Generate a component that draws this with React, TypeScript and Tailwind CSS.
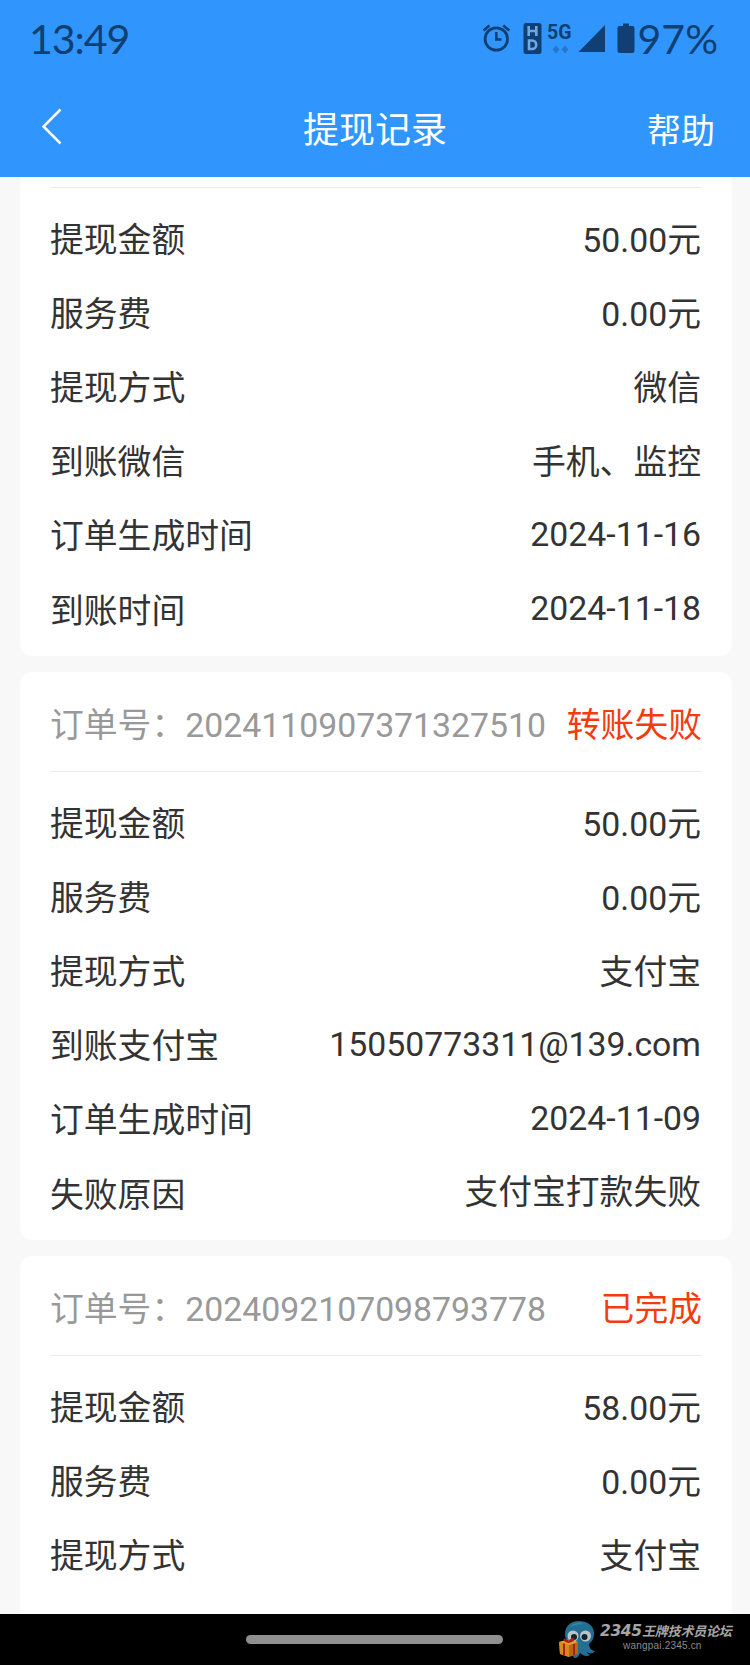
import clsx from 'clsx';

interface Field {
  label: string;
  value: string;
  raised?: boolean;
}

interface WithdrawRecord {
  orderNo: string;
  status: string;
  fields: Field[];
}

const records: WithdrawRecord[] = [
  {
    orderNo: '',
    status: '',
    fields: [
      { label: '提现金额', value: '50.00元' },
      { label: '服务费', value: '0.00元' },
      { label: '提现方式', value: '微信' },
      { label: '到账微信', value: '手机、监控' },
      { label: '订单生成时间', value: '2024-11-16', raised: true },
      { label: '到账时间', value: '2024-11-18', raised: true },
    ],
  },
  {
    orderNo: '2024110907371327510',
    status: '转账失败',
    fields: [
      { label: '提现金额', value: '50.00元' },
      { label: '服务费', value: '0.00元' },
      { label: '提现方式', value: '支付宝' },
      { label: '到账支付宝', value: '15050773311@139.com', raised: true },
      { label: '订单生成时间', value: '2024-11-09', raised: true },
      { label: '失败原因', value: '支付宝打款失败', raised: true },
    ],
  },
  {
    orderNo: '2024092107098793778',
    status: '已完成',
    fields: [
      { label: '提现金额', value: '58.00元' },
      { label: '服务费', value: '0.00元' },
      { label: '提现方式', value: '支付宝' },
    ],
  },
];

const StatusBar = () => (
  <div className="flex h-[78px] items-center justify-between pb-[2px] pl-[29px] pr-[32px] text-[#0f3f73]">
    <span className="font-['Lato',sans-serif] text-[41px] leading-none tracking-[-1px]">13:49</span>
    <div className="flex items-center">
      <svg width="156" height="38" viewBox="0 1 156 38" fill="none">
        {/* alarm clock */}
        <circle cx="14.3" cy="21" r="11.2" stroke="currentColor" strokeWidth="2.8" />
        <path d="M14.3 14v7.5h5.2M1.5 12.5l6-5M21.3 7.500l6 5" stroke="currentColor" strokeWidth="2.6" />
        {/* HD badge */}
        <rect x="41.500" y="5" width="18" height="31" rx="2.5" fill="currentColor" />
        <path
          d="M46.700 8v10M54.300 8v10M46.500 13h8M47 22.500h3a4 4 0 0 1 0 8.500h-3z"
          stroke="#6ea9e6"
          strokeWidth="2.600"
        />
        <text x="65" y="21" fill="currentColor" className="font-['Roboto',sans-serif] text-[19.5px] font-bold">
          5G
        </text>
        <path d="M74 27.500l3.500 4-3.500 4-3.500-4zM83 27.500l3.500 4-3.500 4-3.500-4z" fill="#2577cc" />
        {/* signal and battery */}
        <path d="M123 7v27H96.500z" fill="currentColor" />
        <path
          d="M141 5.500h6v2.500h3.500a2 2 0 0 1 2 2v23a2 2 0 0 1-2 2h-13a2 2 0 0 1-2-2V10a2 2 0 0 1 2-2h3.500z"
          fill="currentColor"
        />
      </svg>
      <span className="font-['Lato',sans-serif] text-[41px] leading-none">97%</span>
    </div>
  </div>
);

const NavBar = () => (
  <div className="grid h-[99px] grid-cols-[200px_1fr_200px] items-center pb-px text-white">
    <svg className="ml-[40px]" width="24" height="40" viewBox="0 0 24 40" fill="none">
      <path d="M20.500 2.500L3.500 19.500l17 17" stroke="currentColor" strokeWidth="2.500" />
    </svg>
    <h1 className="pt-[7px] text-center text-[36px]">提现记录</h1>
    <span className="pt-[7px] pr-[35px] text-right text-[34px]">帮助</span>
  </div>
);

const RecordCard = ({ record, first, last }: { record: WithdrawRecord; first: boolean; last: boolean }) => (
  <section
    className={clsx(
      'shrink-0 bg-white px-[30px] pb-[7px]',
      first ? 'pt-[10px]' : 'rounded-t-[12px]',
      last ? 'flex-1' : 'rounded-b-[12px]',
    )}
  >
    {!first && (
      <div className="flex h-[99.500px] items-center justify-between pt-[10px]">
        <span className="text-[#999999]">订单号：{record.orderNo}</span>
        <span className="text-[#f23c10]">{record.status}</span>
      </div>
    )}
    <div className="border-t border-[#ececec] pt-[16px]">
      {record.fields.map((field) => (
        <div key={field.label} className="flex h-[74.100px] items-center justify-between">
          <span>{field.label}</span>
          <span className={clsx('pr-px', field.raised && 'pb-[5px]')}>{field.value}</span>
        </div>
      ))}
    </div>
  </section>
);

// Small octopus mascot holding a gift box
const Mascot = () => (
  <svg width="40" height="40" viewBox="0 0 40 40">
    <path
      d="M22 1C13 1 8 7 8 14c0 5 3 8 6 11-3 3-7 3-10 7 4 2 8 1 11 0 2 3 0 5 3 6 3 0 4-3 5-5 3 3 7 4 10 2-2-1-3-2-3-3 3 2 6 2 8-1-4 0-6-4-6-7 4-3 5-7 5-11C37 6 31 1 22 1z"
      fill="#226f93"
    />
    <path d="M13 7c3-4 9-5 14-3-5 0-10 1-14 3z" fill="#3d8aa9" />
    <circle cx="16" cy="16" r="5.500" fill="#b9c2c6" />
    <circle cx="28.500" cy="16" r="5.500" fill="#b9c2c6" />
    <circle cx="17" cy="17" r="3" fill="#12222c" />
    <circle cx="27.500" cy="17" r="3" fill="#12222c" />
    <path d="M2 22l11-3 8 3v12l-9 3-9-3z" fill="#b8690f" />
    <path d="M2 22l10 3v12l-9-3z" fill="#d88a1a" />
    <path d="M2 22l11-3 8 3-9 3z" fill="#e3a52d" />
    <path d="M7 23.500v12M17 24v11" stroke="#a91e14" strokeWidth="2" fill="none" />
    <path d="M12 22c-5-5-7-1 0 0 4-6 8-2 0 0z" stroke="#a91e14" strokeWidth="1.800" fill="none" />
  </svg>
);

const App = () => {
  return (
    <div className="flex h-[1665px] w-[750px] flex-col overflow-hidden bg-[#f8f8f8] font-['Roboto','Noto_Sans_CJK_SC',sans-serif] text-[33.8px] leading-[50px] text-[#333333]">
      <header className="h-[177px] shrink-0 bg-[#3096fd]">
        <StatusBar />
        <NavBar />
      </header>

      <main className="flex min-h-0 flex-1 flex-col gap-[16px] overflow-hidden pl-[20px] pr-[18px]">
        {records.map((record, i) => (
          <RecordCard key={i} record={record} first={i === 0} last={i === records.length - 1} />
        ))}
      </main>

      <footer className="grid h-[51px] shrink-0 grid-cols-[246px_257px_1fr] items-center bg-black">
        <div />
        <div className="h-[9px] rounded-full bg-[#8f8f8f]" />
        <div className="flex items-center pl-[54px]">
          <Mascot />
          <div className="flex flex-col pb-[7px] pl-[3px]">
            <div className="flex items-center whitespace-nowrap font-bold italic text-[#a5a5a5]">
              <span className="w-[42px] font-['DejaVu_Sans',sans-serif] text-[15.500px] leading-[18px] tracking-[-0.400px]">
                2345
              </span>
              <span className="font-['Noto_Sans_CJK_SC',sans-serif] text-[13px] leading-[18px] tracking-[-0.200px]">
                王牌技术员论坛
              </span>
            </div>
            <span className="pl-[23px] font-['Liberation_Sans',sans-serif] text-[10px] leading-[11px] tracking-[0.200px] text-[#8c8c8c]">
              wangpai.2345.cn
            </span>
          </div>
        </div>
      </footer>
    </div>
  );
};

export default App;
